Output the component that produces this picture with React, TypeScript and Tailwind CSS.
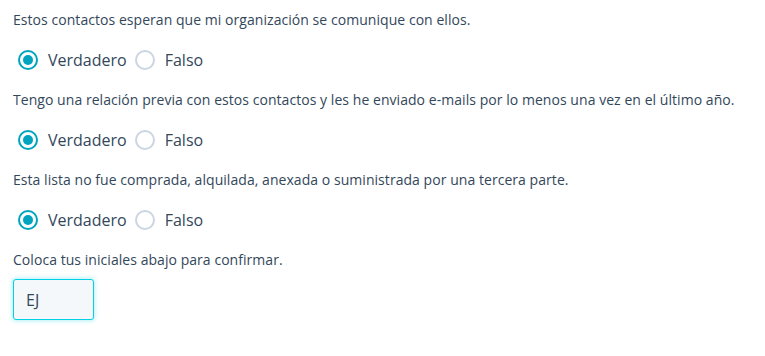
import { useState } from 'react';

const questions = [
  'Estos contactos esperan que mi organización se comunique con ellos.',
  'Tengo una relación previa con estos contactos y les he enviado e-mails por lo menos una vez en el último año.',
  'Esta lista no fue comprada, alquilada, anexada o suministrada por una tercera parte.',
];

function Radio({ checked, label, onClick }: { checked: boolean; label: string; onClick: () => void }) {
  return (
    <button type="button" onClick={onClick} className="flex items-center gap-[10px]">
      <span
        className={
          checked
            ? 'flex h-[20px] w-[20px] items-center justify-center rounded-full border-2 border-[#00a4bd] bg-white'
            : 'flex h-[20px] w-[20px] items-center justify-center rounded-full border-2 border-[#cbd6e2] bg-white'
        }
      >
        {checked && <span className="h-[10px] w-[10px] rounded-full bg-[#00a4bd]" />}
      </span>
      <span className="text-[16px] text-[#33475b]">{label}</span>
    </button>
  );
}

export default function App() {
  const [answers, setAnswers] = useState<boolean[]>([true, true, true]);
  const [initials, setInitials] = useState('EJ');

  return (
    <div
      className="h-[356px] w-[765px] bg-white pl-[13px] pt-[11px] text-[#33475b]"
      style={{ fontFamily: '"Open Sans", Lato, sans-serif' }}
    >
      {questions.map((q, i) => (
        <div key={i} className="mb-[11px]">
          <p className="h-[18px] text-[14px] leading-[18px] tracking-[0.05px]">{q}</p>
          <div className="mt-[11px] flex h-[40px] items-center gap-[8px] pl-[5px]">
            <Radio
              checked={answers[i]}
              label="Verdadero"
              onClick={() => setAnswers((prev) => prev.map((a, j) => (j === i ? true : a)))}
            />
            <Radio
              checked={!answers[i]}
              label="Falso"
              onClick={() => setAnswers((prev) => prev.map((a, j) => (j === i ? false : a)))}
            />
          </div>
        </div>
      ))}
      <p className="h-[18px] text-[14px] leading-[18px] tracking-[0.05px]">
        Coloca tus iniciales abajo para confirmar.
      </p>
      <input
        autoFocus
        value={initials}
        onChange={(e) => setInitials(e.target.value)}
        className="mt-[10px] h-[41px] w-[81px] rounded-[3px] border border-[#00d0e4] bg-[#f5f8fa] px-[12px] text-[16px] text-[#33475b] caret-[#33475b] outline-none shadow-[0_0_4px_1px_rgba(0,208,228,0.3)]"
      />
    </div>
  );
}
